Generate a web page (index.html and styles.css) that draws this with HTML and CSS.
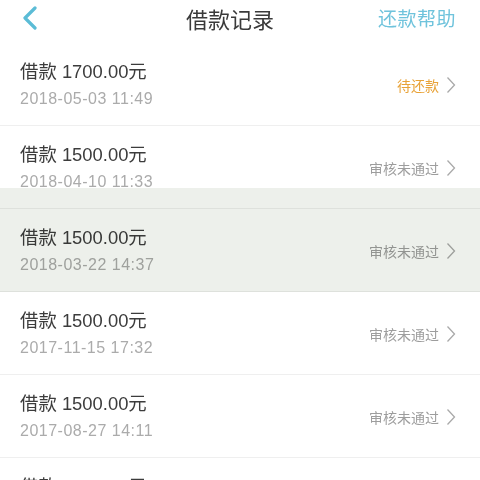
FILE: index.html
```html
<!DOCTYPE html>
<html lang="zh-CN">
<head>
<meta charset="utf-8">
<title>借款记录</title>
<link rel="stylesheet" href="styles.css">
</head>
<body>
<div class="page">
  <header class="nav">
    <span class="back">
      <svg width="16" height="24" viewBox="0 0 16 24"><path d="M13 2 L3 12 L13 22" fill="none" stroke="#5bbcd6" stroke-width="3.2" stroke-linecap="round" stroke-linejoin="round"/></svg>
    </span>
    <h1 class="title">借款记录</h1>
    <span class="help">还款帮助</span>
  </header>
  <ul class="list">
    <li class="row">
      <div class="info"><div class="amount">借款 1700.00元</div><div class="date">2018-05-03 11:49</div></div>
      <div class="status pending">待还款<svg class="chev" width="10" height="18" viewBox="0 0 10 18"><path d="M1.5 1.5 L8.5 9 L1.5 16.5" fill="none" stroke="#a9a9a9" stroke-width="1.3"/></svg></div>
    </li>
    <li class="row">
      <div class="info"><div class="amount">借款 1500.00元</div><div class="date">2018-04-10 11:33</div></div>
      <div class="status">审核未通过<svg class="chev" width="10" height="18" viewBox="0 0 10 18"><path d="M1.5 1.5 L8.5 9 L1.5 16.5" fill="none" stroke="#a9a9a9" stroke-width="1.3"/></svg></div>
    </li>
    <li class="row">
      <div class="info"><div class="amount">借款 1500.00元</div><div class="date">2018-03-22 14:37</div></div>
      <div class="status">审核未通过<svg class="chev" width="10" height="18" viewBox="0 0 10 18"><path d="M1.5 1.5 L8.5 9 L1.5 16.5" fill="none" stroke="#a9a9a9" stroke-width="1.3"/></svg></div>
    </li>
    <li class="row">
      <div class="info"><div class="amount">借款 1500.00元</div><div class="date">2017-11-15 17:32</div></div>
      <div class="status">审核未通过<svg class="chev" width="10" height="18" viewBox="0 0 10 18"><path d="M1.5 1.5 L8.5 9 L1.5 16.5" fill="none" stroke="#a9a9a9" stroke-width="1.3"/></svg></div>
    </li>
    <li class="row">
      <div class="info"><div class="amount">借款 1500.00元</div><div class="date">2017-08-27 14:11</div></div>
      <div class="status">审核未通过<svg class="chev" width="10" height="18" viewBox="0 0 10 18"><path d="M1.5 1.5 L8.5 9 L1.5 16.5" fill="none" stroke="#a9a9a9" stroke-width="1.3"/></svg></div>
    </li>
    <li class="row">
      <div class="info"><div class="amount">借款 1500.00元</div><div class="date">2017-06-12 10:25</div></div>
      <div class="status">审核未通过<svg class="chev" width="10" height="18" viewBox="0 0 10 18"><path d="M1.5 1.5 L8.5 9 L1.5 16.5" fill="none" stroke="#a9a9a9" stroke-width="1.3"/></svg></div>
    </li>
  </ul>
  <div class="band"></div>
</div>
</body>
</html>
```
FILE: styles.css
```css
html, body {
  margin: 0;
  padding: 0;
  background: #fff;
}
body {
  font-family: "Liberation Sans", "Noto Sans CJK SC", sans-serif;
  overflow: hidden;
}
.page {
  position: relative;
  width: 480px;
  height: 480px;
  overflow: hidden;
}
.nav {
  height: 43px;
  box-sizing: border-box;
  padding: 0 24px 7px 22px;
  display: flex;
  align-items: center;
  justify-content: space-between;
}
.back {
  width: 60px;
  display: flex;
  align-items: center;
}
.back svg { display: block; }
.title {
  margin: 0;
  font-family: "Noto Sans CJK SC", sans-serif;
  font-weight: 400;
  font-size: 22px;
  color: #3a3a3a;
  line-height: 30px;
}
.help {
  font-family: "Noto Sans CJK SC", sans-serif;
  font-size: 19px;
  letter-spacing: 0.5px;
  color: #6fc3dc;
  line-height: 28px;
}
.list {
  list-style: none;
  margin: 0;
  padding: 0;
}
.row {
  height: 83px;
  box-sizing: border-box;
  border-bottom: 1px solid #efefef;
  padding: 0 24px 0 20px;
  display: flex;
  align-items: center;
  justify-content: space-between;
}
.info {
  display: flex;
  flex-direction: column;
  gap: 4px;
  margin-top: 2px;
}
.amount {
  font-size: 18.4px;
  line-height: 24px;
  color: #3c3c3c;
}
.date {
  font-size: 16px;
  line-height: 22px;
  letter-spacing: 0.5px;
  color: #ababab;
}
.status {
  display: flex;
  align-items: center;
  gap: 7px;
  font-family: "Noto Sans CJK SC", sans-serif;
  font-size: 14px;
  color: #9d9d9d;
  margin-top: 2px;
}
.status.pending {
  color: #e8a237;
}
.chev { display: block; }
.band {
  position: absolute;
  left: 0;
  top: 188px;
  width: 480px;
  height: 104px;
  background: #edf0eb;
  mix-blend-mode: multiply;
}
```
